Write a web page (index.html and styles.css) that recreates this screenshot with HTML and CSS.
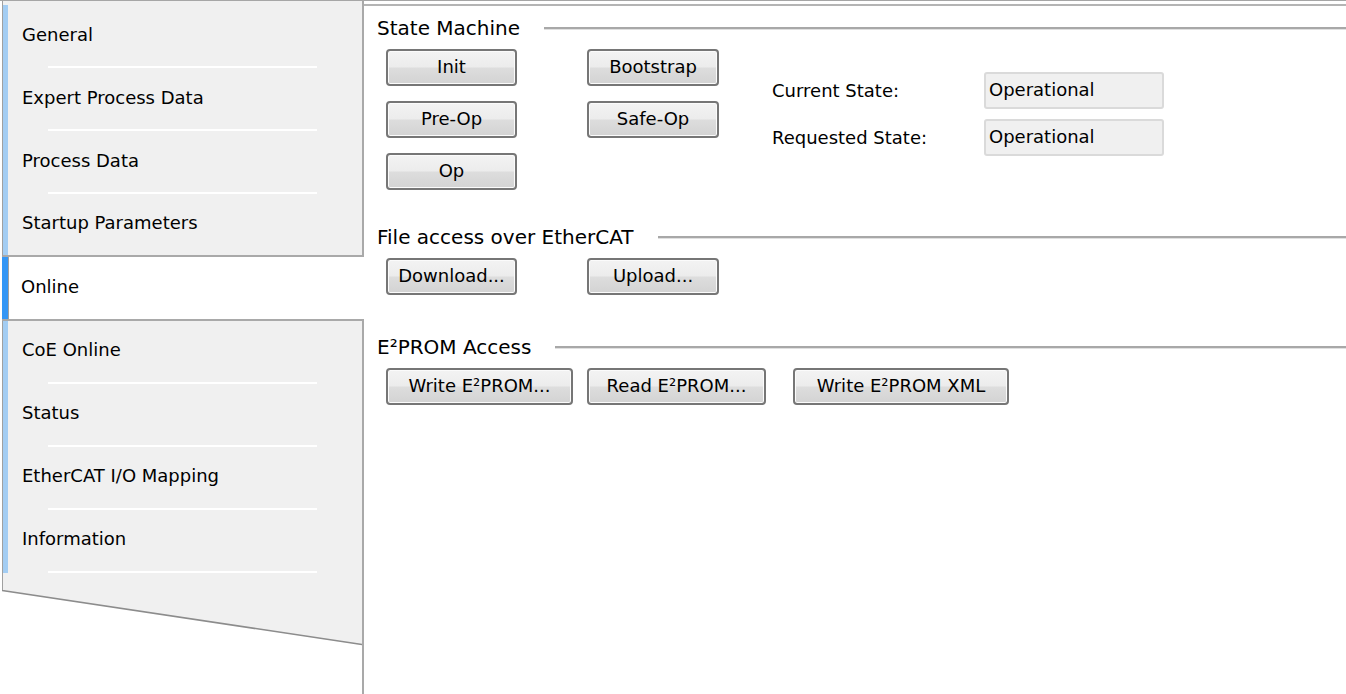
FILE: index.html
```html
<!DOCTYPE html>
<html>
<head>
<meta charset="utf-8">
<link rel="stylesheet" href="styles.css">
</head>
<body>
<div class="window">
  <nav class="sidebar">
    <div class="tabgroup top">
      <div class="tab sep">General</div>
      <div class="tab sep">Expert Process Data</div>
      <div class="tab sep">Process Data</div>
      <div class="tab last">Startup Parameters</div>
    </div>
    <div class="tab selected">Online</div>
    <div class="tabgroup bottom">
      <div class="tablist">
        <div class="tab sep">CoE Online</div>
        <div class="tab sep">Status</div>
        <div class="tab sep">EtherCAT I/O Mapping</div>
        <div class="tab sep">Information</div>
      </div>
      <svg class="slant" viewBox="0 0 360 56" preserveAspectRatio="none">
        <polygon points="0,0 360,0 360,55" fill="#f0f0f0"/>
        <line x1="0" y1="0.5" x2="360" y2="54.5" stroke="#8c8c8c" stroke-width="1.6"/>
      </svg>
    </div>
    <div class="tail"></div>
  </nav>
  <main class="panel">
    <section class="section state">
      <h2 class="heading">State Machine</h2>
      <div class="state-row">
        <div class="btn-grid">
          <button class="btn">Init</button>
          <button class="btn">Bootstrap</button>
          <button class="btn">Pre-Op</button>
          <button class="btn">Safe-Op</button>
          <button class="btn">Op</button>
        </div>
        <div class="state-info">
          <span class="label">Current State:</span>
          <div class="field">Operational</div>
          <span class="label">Requested State:</span>
          <div class="field">Operational</div>
        </div>
      </div>
    </section>
    <section class="section file">
      <h2 class="heading">File access over EtherCAT</h2>
      <div class="btn-row file-row">
        <button class="btn w131">Download...</button>
        <button class="btn w132">Upload...</button>
      </div>
    </section>
    <section class="section eeprom">
      <h2 class="heading">E²PROM Access</h2>
      <div class="btn-row eeprom-row">
        <button class="btn w187">Write E²PROM...</button>
        <button class="btn w179">Read E²PROM...</button>
        <button class="btn w216 xml">Write E²PROM XML</button>
      </div>
    </section>
  </main>
</div>
</body>
</html>
```

FILE: styles.css
```css
* { box-sizing: border-box; }
html, body {
  margin: 0;
  padding: 0;
  background: #ffffff;
}
body {
  font-family: "DejaVu Sans", "Liberation Sans", sans-serif;
  font-size: 18px;
  color: #000;
}
.window {
  display: flex;
  height: 694px;
  border-top: 1px solid #a6a6a6;
  overflow: hidden;
}
.sidebar {
  width: 364px;
  flex: none;
  display: flex;
  flex-direction: column;
}
.tabgroup {
  margin-left: 2px;
  border-right: 2px solid #a9a9a9;
}
.tabgroup.top {
  background: #f0f0f0;
  border-left: 1px solid #a0a0a0;
  border-bottom: 2px solid #a9a9a9;
  padding-top: 4px;
}
.tabgroup.bottom {
  border-top: 2px solid #a9a9a9;
  background: #fff;
}
.tablist {
  background: #f0f0f0;
  border-left: 1px solid #a0a0a0;
  padding-bottom: 17px;
}
.tab {
  position: relative;
  height: 63px;
  display: flex;
  align-items: center;
  padding-left: 14px;
  border-left: 5px solid #a3cdf3;
  line-height: 22px;
  padding-bottom: 3px;
}
.tabgroup.top .tab.last {
  height: 61px;
}
.tablist .tab {
  padding-bottom: 5px;
}
.tab.sep::after {
  content: "";
  position: absolute;
  left: 40px;
  width: 269px;
  bottom: 0;
  height: 2px;
  background: #ffffff;
}
.tab.selected {
  margin-left: 2px;
  background: #ffffff;
  border-left: 6px solid #3496f5;
  box-shadow: inset 1px 0 0 #a0a0a0;
  padding-left: 13px;
  height: 62px;
}
.slant {
  display: block;
  width: 100%;
  height: 56px;
}
.tail {
  flex: 1;
  margin-left: 2px;
  border-right: 2px solid #a9a9a9;
}
.panel {
  flex: 1;
  margin-top: 3px;
  border-top: 2px solid #b4b4b4;
  padding-left: 13px;
  padding-top: 10px;
}
.heading {
  margin: 0;
  font-size: 20px;
  font-weight: normal;
  height: 24px;
  line-height: 24px;
  display: flex;
  align-items: center;
  gap: 24px;
  white-space: nowrap;
}
.heading::after {
  content: "";
  flex: 1;
  height: 2px;
  background: #a8a8a8;
  border-bottom: 1px solid #e0e0e0;
  margin-top: 1px;
}
.state-row {
  display: flex;
  margin-top: 9px;
  margin-left: 9px;
  align-items: flex-start;
}
.btn-grid {
  display: grid;
  grid-template-columns: 131px 132px;
  grid-auto-rows: 37px;
  column-gap: 70px;
  row-gap: 15px;
}
.btn {
  font-family: "DejaVu Sans", "Liberation Sans", sans-serif;
  font-size: 18px;
  color: #000;
  height: 37px;
  padding: 0 4px 2px;
  border: 2px solid #767676;
  border-radius: 4px;
  background: linear-gradient(#f3f3f3 0%, #ececec 48%, #dddddd 52%, #d3d3d3 100%);
  box-shadow: inset 0 0 0 1px #fbfbfb;
  white-space: nowrap;
}
.state-info {
  display: grid;
  grid-template-columns: 212px 180px;
  grid-auto-rows: 37px;
  row-gap: 10px;
  margin-left: 53px;
  margin-top: 23px;
  align-items: center;
}
.label {
  line-height: 22px;
}
.field {
  height: 37px;
  background: #f0f0f0;
  border: 2px solid #dadada;
  border-radius: 3px;
  padding-left: 3px;
  display: flex;
  align-items: center;
  padding-bottom: 2px;
}
.section.file { margin-top: 35px; }
.section.eeprom { margin-top: 40px; }
.btn-row {
  display: flex;
  margin-top: 9px;
  margin-left: 9px;
}
.file-row { gap: 70px; }
.eeprom-row { gap: 14px; }
.eeprom-row .xml { margin-left: 13px; }
.w131 { width: 131px; }
.w132 { width: 132px; }
.w187 { width: 187px; }
.w179 { width: 179px; }
.w216 { width: 216px; }
```
